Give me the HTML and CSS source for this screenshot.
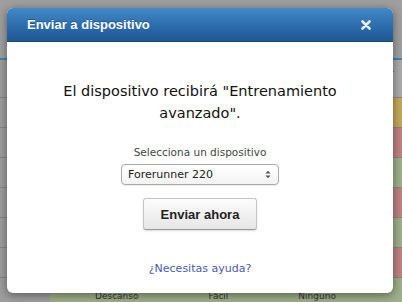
FILE: index.html
```html
<!DOCTYPE html>
<html lang="es">
<head>
    <meta charset="UTF-8">
    <meta name="viewport" content="width=device-width, initial-scale=1.0">
    <title>Enviar a dispositivo</title>
    <link rel="stylesheet" href="styles.css">
</head>
<body>

<div class="page">
    <div class="topbar"></div>
    <div class="row first"><span class="label"></span><span class="cell head">er</span></div>
    <div class="row"><span class="label"></span><span class="cell yellow"></span></div>
    <div class="row"><span class="label"></span><span class="cell red"></span></div>
    <div class="row"><span class="label"></span><span class="cell green"></span></div>
    <div class="row"><span class="label"></span><span class="cell red"></span></div>
    <div class="row"><span class="label"></span><span class="cell green"></span></div>
    <div class="row"><span class="label"></span><span class="cell red"></span></div>
    <div class="row last"><span class="label"></span><span class="cell green wide">
        <span class="ghost">Descanso</span><span class="ghost">Fácil</span><span class="ghost">Ninguno</span>
    </span></div>
</div>

<div class="overlay"></div>

<div class="modal">
    <div class="modal-header">
        <h3>Enviar a dispositivo</h3>
        <span class="close">
            <svg width="10" height="10" viewBox="0 0 10 10">
                <path d="M1.5 1.5 L8.5 8.5 M8.5 1.5 L1.5 8.5" stroke="#e6eef7" stroke-width="2.6" stroke-linecap="round"/>
            </svg>
        </span>
    </div>
    <div class="modal-body">
        <p class="message">El dispositivo recibirá "Entrenamiento avanzado".</p>
        <div class="field">
            <label>Selecciona un dispositivo</label>
            <div class="select">
                <span>Forerunner 220</span>
                <svg width="6" height="9" viewBox="0 0 6 9">
                    <path d="M0.5 3.5 L3 0.8 L5.5 3.5 Z M0.5 5.5 L3 8.2 L5.5 5.5 Z" fill="#555"/>
                </svg>
            </div>
        </div>
        <button class="send">Enviar ahora</button>
        <a class="help" href="#">¿Necesitas ayuda?</a>
    </div>
</div>

</body>
</html>
```

FILE: styles.css
```css
body {
    margin: 0;
    padding: 0;
    width: 402px;
    height: 302px;
    overflow: hidden;
    font-family: "DejaVu Sans", sans-serif;
    background-color: #a3a3a3;
    position: relative;
}
.topbar {
    height: 58px;
    background-color: #a8a8a8;
    border-bottom: 2px solid #4f86b3;
}
.row {
    display: flex;
    height: 29px;
    border-bottom: 1px solid #8e8e8e;
}
.row.first {
    height: 37px;
}
.row .label {
    flex: 1;
    background-color: #a6a6a6;
}
.row .cell {
    width: 24px;
    background-color: #aaa;
    font-size: 13px;
    line-height: 27px;
    color: #222;
}
.cell.head {
    background-color: #b4b4b4;
    padding-left: 2px;
    width: 22px;
}
.cell.yellow {
    background-color: #cfb05f;
}
.cell.red {
    background-color: #c98888;
}
.cell.green {
    background-color: #a7b991;
}
.row.last {
    height: 24px;
    border-bottom: none;
}
.row.last .label {
    flex: 0 0 50px;
}
.cell.wide {
    flex: 1;
    display: flex;
    align-items: flex-end;
    gap: 70px;
    padding-left: 45px;
    padding-bottom: 1px;
    box-sizing: border-box;
    font-size: 9px;
    color: #333;
}
.ghost {
    line-height: 10px;
}
.overlay {
    position: absolute;
    top: 0;
    left: 0;
    right: 0;
    bottom: 0;
    background-color: rgba(60, 60, 60, 0.08);
}
.modal {
    position: absolute;
    top: 8px;
    left: 7px;
    width: 386px;
    height: 285px;
    background-color: #fff;
    border-radius: 6px;
    overflow: hidden;
    box-shadow: 0 2px 10px rgba(0, 0, 0, 0.45);
    display: flex;
    flex-direction: column;
}
.modal-header {
    height: 34px;
    background: linear-gradient(#4289c9, #2764a3 70%, #1f5a94);
    border-bottom: 1px solid #174776;
    display: flex;
    align-items: center;
    justify-content: space-between;
    padding: 0 22px 0 20px;
    box-sizing: border-box;
}
.modal-header h3 {
    margin: 0;
    font-family: "Liberation Sans", Arial, sans-serif;
    font-size: 13px;
    font-weight: bold;
    color: #fff;
    text-shadow: 0 -1px 0 rgba(0, 0, 0, 0.25);
}
.close {
    display: flex;
    margin-top: 1px;
}
.modal-body {
    flex: 1;
    display: flex;
    flex-direction: column;
    align-items: center;
    padding-top: 38px;
}
.message {
    margin: 0;
    width: 330px;
    text-align: center;
    font-size: 14.5px;
    line-height: 22px;
    color: #111;
}
.field {
    margin-top: 22px;
    display: flex;
    flex-direction: column;
    align-items: center;
}
.field label {
    font-size: 10.5px;
    color: #444;
    margin-bottom: 6px;
}
.select {
    width: 158px;
    height: 21px;
    box-sizing: border-box;
    border: 1px solid #a9a9a9;
    border-radius: 4px;
    background: linear-gradient(#ffffff, #f3f3f3);
    display: flex;
    align-items: center;
    justify-content: space-between;
    padding: 0 7px 0 6px;
    font-size: 11px;
    color: #222;
    box-shadow: 0 1px 1px rgba(0, 0, 0, 0.08);
}
.send {
    margin-top: 13px;
    width: 114px;
    height: 32px;
    border: 1px solid #c4c4c4;
    border-bottom-color: #999;
    border-radius: 3px;
    background: linear-gradient(#fdfdfd, #e6e6e6);
    font-family: "Liberation Sans", Arial, sans-serif;
    font-size: 13px;
    font-weight: bold;
    color: #222;
    box-shadow: 0 1px 2px rgba(0, 0, 0, 0.15);
}
.help {
    margin-top: 32px;
    font-size: 11px;
    color: #4a5ab3;
    text-decoration: none;
}
```
